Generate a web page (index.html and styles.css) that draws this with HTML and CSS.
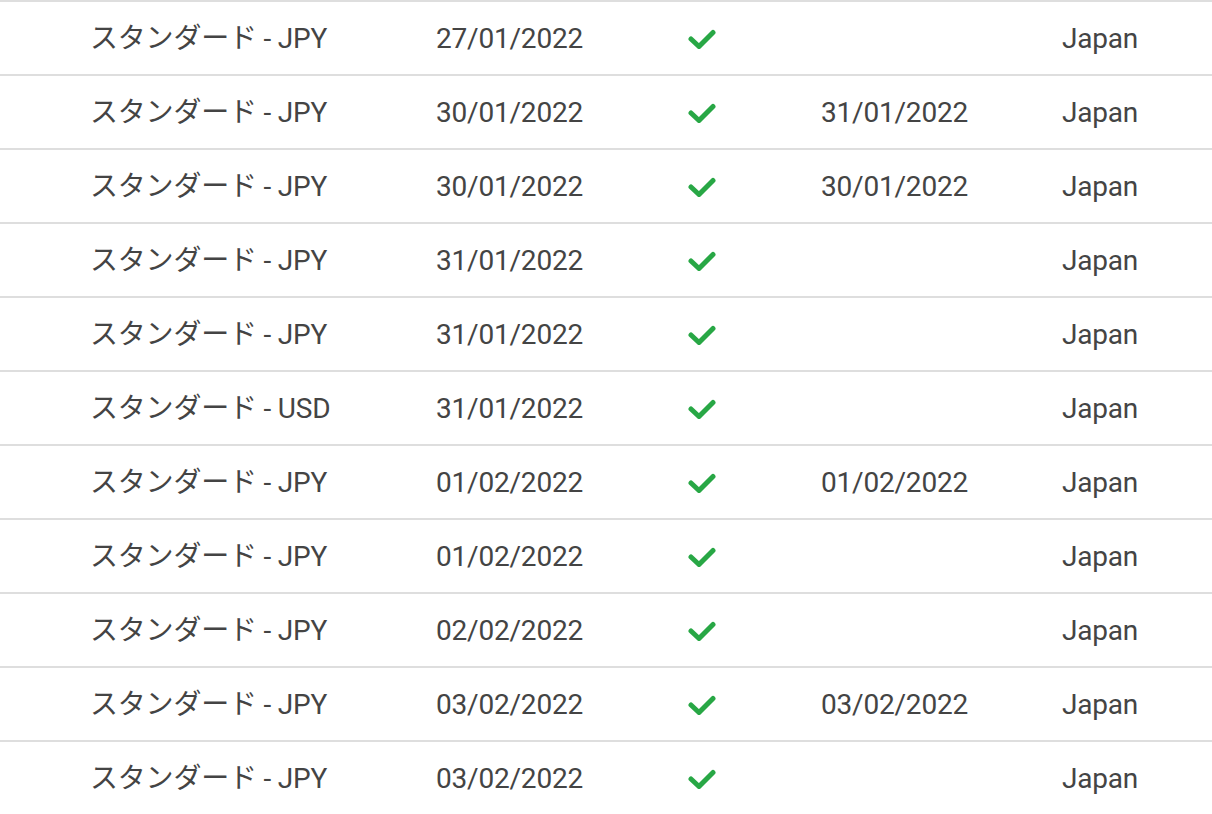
FILE: index.html
```html
<!DOCTYPE html>
<html lang="ja">
<head>
<meta charset="utf-8">
<link rel="stylesheet" href="styles.css">
</head>
<body>
<div class="table">
  <div class="row"><div class="c plan">スタンダード - JPY</div><div class="c date">27/01/2022</div><div class="c check"><svg viewBox="0 0 28 20" width="28" height="20"><polyline points="3,10 11,17.5 25,3.5"/></svg></div><div class="c date2"></div><div class="c country">Japan</div></div>
  <div class="row"><div class="c plan">スタンダード - JPY</div><div class="c date">30/01/2022</div><div class="c check"><svg viewBox="0 0 28 20" width="28" height="20"><polyline points="3,10 11,17.5 25,3.5"/></svg></div><div class="c date2">31/01/2022</div><div class="c country">Japan</div></div>
  <div class="row"><div class="c plan">スタンダード - JPY</div><div class="c date">30/01/2022</div><div class="c check"><svg viewBox="0 0 28 20" width="28" height="20"><polyline points="3,10 11,17.5 25,3.5"/></svg></div><div class="c date2">30/01/2022</div><div class="c country">Japan</div></div>
  <div class="row"><div class="c plan">スタンダード - JPY</div><div class="c date">31/01/2022</div><div class="c check"><svg viewBox="0 0 28 20" width="28" height="20"><polyline points="3,10 11,17.5 25,3.5"/></svg></div><div class="c date2"></div><div class="c country">Japan</div></div>
  <div class="row"><div class="c plan">スタンダード - JPY</div><div class="c date">31/01/2022</div><div class="c check"><svg viewBox="0 0 28 20" width="28" height="20"><polyline points="3,10 11,17.5 25,3.5"/></svg></div><div class="c date2"></div><div class="c country">Japan</div></div>
  <div class="row"><div class="c plan">スタンダード - USD</div><div class="c date">31/01/2022</div><div class="c check"><svg viewBox="0 0 28 20" width="28" height="20"><polyline points="3,10 11,17.5 25,3.5"/></svg></div><div class="c date2"></div><div class="c country">Japan</div></div>
  <div class="row"><div class="c plan">スタンダード - JPY</div><div class="c date">01/02/2022</div><div class="c check"><svg viewBox="0 0 28 20" width="28" height="20"><polyline points="3,10 11,17.5 25,3.5"/></svg></div><div class="c date2">01/02/2022</div><div class="c country">Japan</div></div>
  <div class="row"><div class="c plan">スタンダード - JPY</div><div class="c date">01/02/2022</div><div class="c check"><svg viewBox="0 0 28 20" width="28" height="20"><polyline points="3,10 11,17.5 25,3.5"/></svg></div><div class="c date2"></div><div class="c country">Japan</div></div>
  <div class="row"><div class="c plan">スタンダード - JPY</div><div class="c date">02/02/2022</div><div class="c check"><svg viewBox="0 0 28 20" width="28" height="20"><polyline points="3,10 11,17.5 25,3.5"/></svg></div><div class="c date2"></div><div class="c country">Japan</div></div>
  <div class="row"><div class="c plan">スタンダード - JPY</div><div class="c date">03/02/2022</div><div class="c check"><svg viewBox="0 0 28 20" width="28" height="20"><polyline points="3,10 11,17.5 25,3.5"/></svg></div><div class="c date2">03/02/2022</div><div class="c country">Japan</div></div>
  <div class="row"><div class="c plan">スタンダード - JPY</div><div class="c date">03/02/2022</div><div class="c check"><svg viewBox="0 0 28 20" width="28" height="20"><polyline points="3,10 11,17.5 25,3.5"/></svg></div><div class="c date2"></div><div class="c country">Japan</div></div>
</div>
</body>
</html>
```
FILE: styles.css
```css
html, body {
  margin: 0;
  padding: 0;
  background: #fff;
  overflow: hidden;
}
.table {
  font-family: Roboto, "Noto Sans CJK JP", sans-serif;
  font-size: 28px;
  letter-spacing: -0.2px;
  color: #444;
}
.row {
  display: grid;
  grid-template-columns: 346px 252px 133px 241px 1fr;
  padding-left: 90px;
  height: 72px;
  border-top: 2px solid #dedede;
  align-items: center;
}
.c {
  white-space: nowrap;
  line-height: 1;
  padding-top: 2px;
}
.check {
  display: flex;
  align-items: center;
  padding-top: 1px;
}
.check svg {
  display: block;
}
.check polyline {
  fill: none;
  stroke: #28a745;
  stroke-width: 5;
  stroke-linecap: round;
  stroke-linejoin: round;
}
```
